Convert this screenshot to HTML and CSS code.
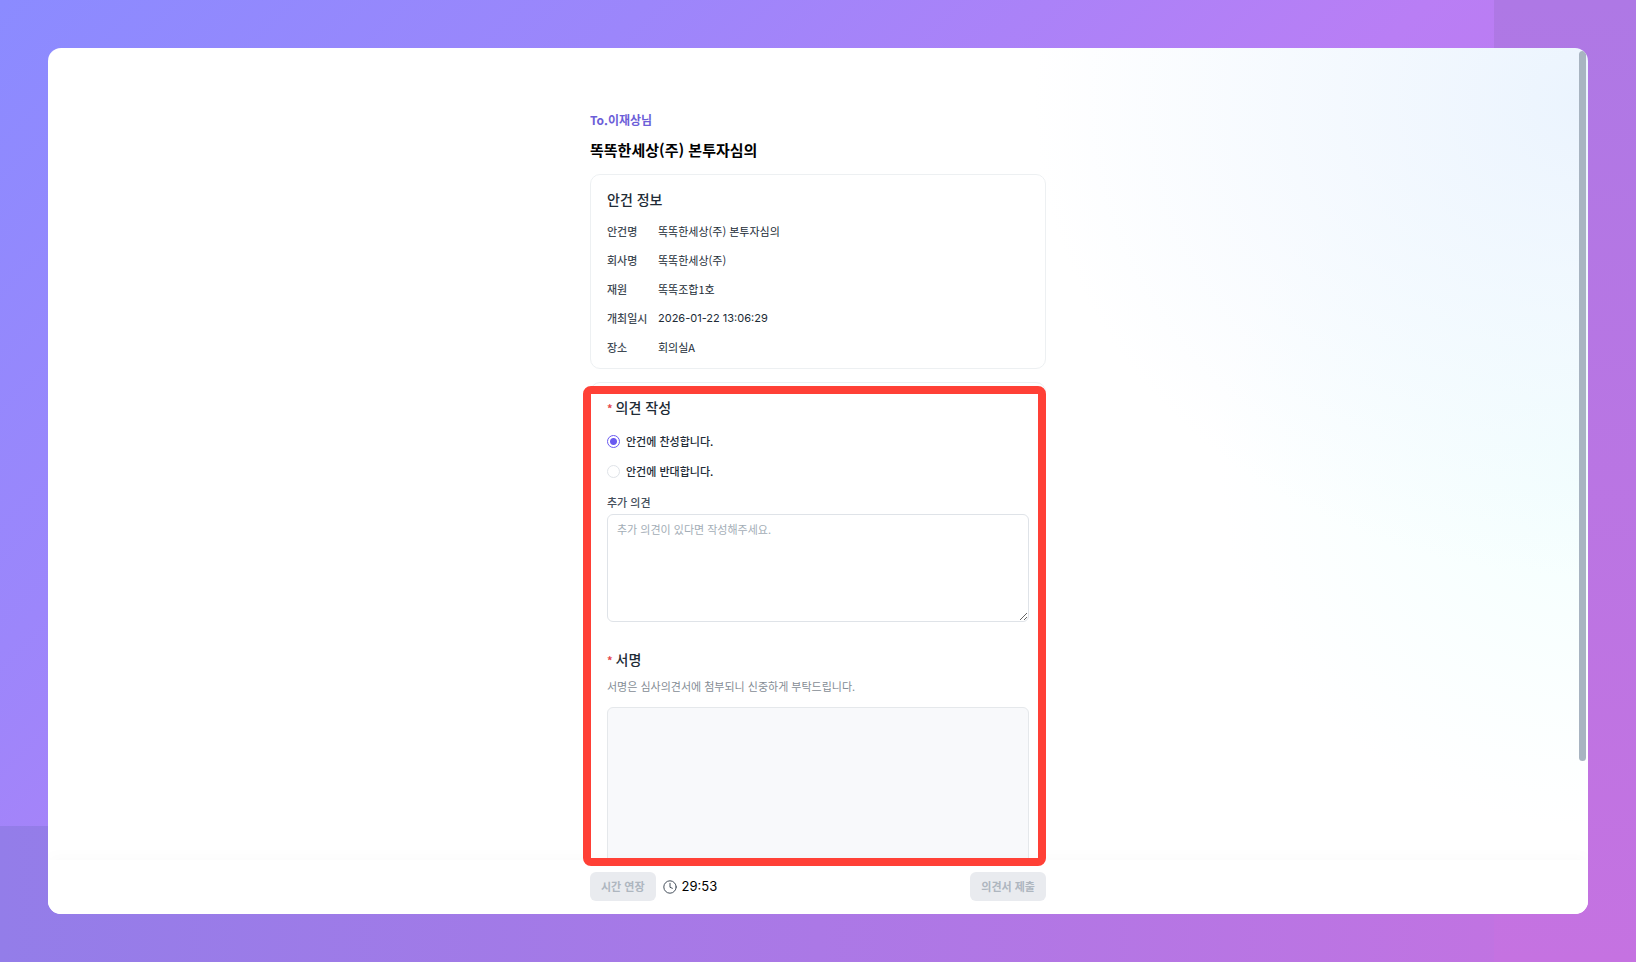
FILE: index.html
```html
<!DOCTYPE html>
<html lang="ko">
<head>
    <meta charset="UTF-8">
    <meta name="viewport" content="width=device-width, initial-scale=1">
    <title>심사의견서</title>
    <link rel="stylesheet" href="styles.css">
</head>
<body>
<div class="window">
    <main class="content">
        <div class="column">
            <p class="to">To.이재상님</p>
            <h1 class="title">똑똑한세상(주) 본투자심의</h1>

            <section class="card info">
                <h2 class="card__title">안건 정보</h2>
                <dl class="info__list">
                    <dt class="info__name">안건명</dt>
                    <dd class="info__value">똑똑한세상(주) 본투자심의</dd>
                    <dt class="info__name">회사명</dt>
                    <dd class="info__value">똑똑한세상(주)</dd>
                    <dt class="info__name">재원</dt>
                    <dd class="info__value">똑똑조합1호</dd>
                    <dt class="info__name">개최일시</dt>
                    <dd class="info__value info__value_date">2026-01-22 13:06:29</dd>
                    <dt class="info__name">장소</dt>
                    <dd class="info__value">회의실A</dd>
                </dl>
            </section>

            <form class="card opinion" id="opinion-form">
                <h2 class="card__title"><span class="required">*</span>의견 작성</h2>
                <div class="radios">
                    <label class="radio"><input type="radio" name="opinion" class="radio__input" checked>안건에 찬성합니다.</label>
                    <label class="radio"><input type="radio" name="opinion" class="radio__input">안건에 반대합니다.</label>
                </div>
                <label for="comment" class="label">추가 의견</label>
                <textarea id="comment" class="textarea" placeholder="추가 의견이 있다면 작성해주세요."></textarea>

                <h2 class="card__title card__title_sign"><span class="required">*</span>서명</h2>
                <p class="hint">서명은 심사의견서에 첨부되니 신중하게 부탁드립니다.</p>
                <canvas class="sign" aria-label="서명"></canvas>
            </form>
        </div>
    </main>
    <div class="scrollbar"></div>

    <footer class="footer">
        <div class="footer__inner">
            <button type="button" class="btn" disabled>시간 연장</button>
            <div class="timer">
                <svg class="timer__icon" viewBox="0 0 14 14" fill="none" stroke="currentColor" stroke-linecap="round" stroke-linejoin="round">
                    <circle cx="7" cy="7" r="6.2"/>
                    <path d="M7 3.3V7.3L9.4 8.3"/>
                </svg>
                <span>29:53</span>
            </div>
            <button type="submit" form="opinion-form" class="btn btn_submit" disabled>의견서 제출</button>
        </div>
        <div class="highlight"></div>
    </footer>
</div>
</body>
</html>
```
FILE: styles.css
```css
* {
    box-sizing: border-box;
}
body {
    height: 100vh;
    margin: 0;
    padding: 48px;
    color: #212b36;
    font: 11px/17px "Noto Sans CJK KR", sans-serif;
    background:
        linear-gradient(#ae78e5, #c572e1) right top / 142px 100% no-repeat,
        linear-gradient(90deg, #937de9, #ab78e6 50%, #c572e1) left bottom / 100% 136px no-repeat,
        linear-gradient(135deg, #8b8bff 0%, #9c86fb 25%, #b97ef5 55%, #c870e2 100%);
}
h1,
h2,
p,
dl,
dd {
    margin: 0;
}
.window {
    position: relative;
    display: flex;
    flex-direction: column;
    height: 100%;
    overflow: hidden;
    border-radius: 13px;
    background:
        radial-gradient(ellipse 36% 55% at 100% 6%, #ebf4fe, rgba(235, 244, 254, 0)),
        radial-gradient(ellipse 24% 42% at 100% 48%, #f3fffe, rgba(243, 255, 254, 0)),
        #fff;
}
.content {
    flex: 1;
    min-height: 0;
    padding: 63px 16px 0;
    overflow: hidden;
}
.column,
.footer__inner {
    width: 100%;
    max-width: 456px;
    margin: 0 auto;
}
.to {
    color: #6c5ed8;
    font-size: 12px;
    font-weight: 700;
}
.title {
    margin: 10px 0 12px;
    color: #000;
    font-size: 15px;
    font-weight: 700;
    line-height: 24px;
}
.card {
    padding: 16px 16px 12px;
    border: 1px solid #edf0f2;
    border-radius: 10px;
    background: #fff;
}
.card__title {
    font-size: 14px;
    font-weight: 500;
    line-height: 17px;
}
.info {
    margin-bottom: 13px;
}
.info__list {
    display: grid;
    grid-template-columns: 42px 1fr;
    gap: 12px 9px;
    margin-top: 15px;
}
.info__name {
    color: #3f4a54;
    font-weight: 500;
}
.info__value_date {
    font-family: Inter, sans-serif;
}
.required {
    margin-right: 3px;
    color: #e5484d;
    font-size: 11px;
    font-weight: 700;
}
.radios {
    display: grid;
    gap: 13px;
    margin: 16px 0 14px;
}
.radio {
    display: flex;
    align-items: center;
    gap: 6px;
    font-weight: 500;
}
.radio__input {
    width: 13px;
    height: 13px;
    margin: 0;
    border: 1px solid #dfe3e8;
    border-radius: 50%;
    appearance: none;
}
.radio__input:checked {
    border-color: #6a5af0;
    background: radial-gradient(circle, #6a5af0 3px, #fff 4px);
}
.label {
    display: block;
    margin-bottom: 3px;
    color: #454f5b;
    font-weight: 500;
}
.textarea {
    display: block;
    width: 100%;
    height: 108px;
    padding: 6px 9px;
    border: 1px solid #dfe3e8;
    border-radius: 6px;
    background: #fff;
    font: inherit;
    resize: vertical;
}
.textarea::placeholder {
    color: #a3adb6;
}
.card__title_sign {
    margin-top: 29px;
}
.hint {
    margin: 9px 0 12px;
    color: #858d95;
}
.sign {
    display: block;
    width: 100%;
    height: 200px;
    border: 1px solid #e5e8eb;
    border-radius: 6px;
    background: #f8f9fb;
}
.scrollbar {
    position: absolute;
    top: 3px;
    right: 2px;
    width: 7px;
    height: 82%;
    border-radius: 4px;
    background: #a8b4c1;
}
.footer {
    position: relative;
    padding: 12px 16px 13px;
    background: #fff;
    box-shadow: 0 -4px 14px rgba(0, 0, 0, .02);
}
.footer__inner {
    display: flex;
    align-items: center;
}
.btn {
    height: 29px;
    padding: 0 11px;
    border: 0;
    border-radius: 6px;
    color: #aeb6bf;
    background: #e9ebef;
    font: inherit;
    font-weight: 700;
}
.btn_submit {
    margin-left: auto;
}
.timer {
    display: flex;
    align-items: center;
    gap: 5px;
    margin-left: 7px;
    color: #000;
    font-family: Inter, sans-serif;
    font-size: 13px;
    font-weight: 400;
}
.timer__icon {
    width: 14px;
    height: 14px;
    color: #454f5b;
}
/* frame around the part of the form to fill in */
.highlight {
    position: absolute;
    bottom: 48px;
    left: 50%;
    width: 463px;
    height: 480px;
    margin-left: -235px;
    border: 8px solid #ff4036;
    border-radius: 8px;
    pointer-events: none;
}
```
